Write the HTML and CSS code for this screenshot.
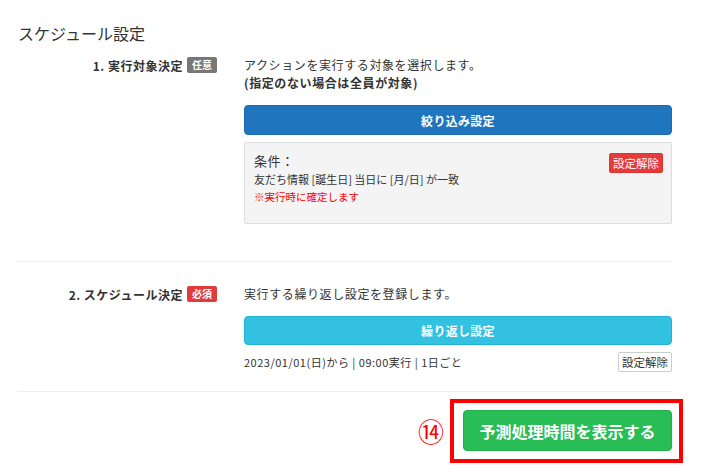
FILE: index.html
```html
<!DOCTYPE html>
<html lang="ja">
<head>
<meta charset="utf-8">
<link rel="stylesheet" href="styles.css">
</head>
<body>
<div class="page">
  <h2 class="title">スケジュール設定</h2>

  <div class="row row-first">
    <div class="label">1. 実行対象決定<span class="badge badge-gray">任意</span></div>
    <div class="content">
      <p class="desc">アクションを実行する対象を選択します。<br><strong>(指定のない場合は全員が対象)</strong></p>
      <button class="btn btn-blue">絞り込み設定</button>
      <div class="cond">
        <div class="cond-text">
          <div class="cond-title">条件：</div>
          <div class="cond-line">友だち情報 [誕生日] 当日に [月/日] が一致</div>
          <div class="cond-note">※実行時に確定します</div>
        </div>
        <button class="btn-red-sm">設定解除</button>
      </div>
    </div>
  </div>

  <div class="row row-second">
    <div class="label">2. スケジュール決定<span class="badge badge-red">必須</span></div>
    <div class="content">
      <p class="desc">実行する繰り返し設定を登録します。</p>
      <button class="btn btn-cyan">繰り返し設定</button>
      <div class="sched">
        <span class="sched-text">2023/01/01(日)から | 09:00実行 | 1日ごと</span>
        <button class="btn-white-sm">設定解除</button>
      </div>
    </div>
  </div>

  <div class="footer">
    <span class="num">⑭</span>
    <div class="highlight">
      <button class="btn-green">予測処理時間を表示する</button>
    </div>
  </div>
</div>
</body>
</html>
```

FILE: styles.css
```css
* { box-sizing: border-box; }
html, body { margin: 0; padding: 0; background: #fff; }
body {
  font-family: "Noto Sans CJK JP", "Noto Sans", sans-serif;
  color: #333;
}
.page {
  width: 672px;
  padding-left: 17px;
}
.title {
  margin: 0;
  padding-top: 21px;
  font-size: 16px;
  font-weight: 400;
  line-height: 24px;
  padding-left: 1px;
}
.row {
  display: grid;
  grid-template-columns: 200px 428px;
  column-gap: 27px;
  border-bottom: 1px solid #eee;
}
.row-first { padding-top: 11px; padding-bottom: 37px; }
.row-second { padding-top: 23px; padding-bottom: 19px; }
.label {
  display: flex;
  justify-content: flex-end;
  align-items: center;
  align-self: start;
  height: 18px;
  font-size: 12px;
  font-weight: 700;
  letter-spacing: 0.5px;
  color: #333;
  white-space: nowrap;
}
.badge {
  display: inline-block;
  margin-left: 4px;
  width: 30px;
  height: 16px;
  line-height: 16px;
  text-align: center;
  font-size: 10px;
  font-weight: 700;
  letter-spacing: 0;
  color: #fff;
  border-radius: 2px;
}
.badge-gray { background: #777; }
.badge-red { background: #e03c3c; }
.content { display: flex; flex-direction: column; }
.desc {
  margin: 0;
  font-size: 12px;
  line-height: 18px;
  letter-spacing: 0.6px;
  color: #333;
}
.desc strong { font-weight: 700; }
.btn {
  display: block;
  width: 100%;
  margin-top: 13px;
  border-radius: 4px;
  font-family: inherit;
  font-size: 12px;
  font-weight: 700;
  letter-spacing: 0.3px;
  color: #fff;
  text-align: center;
  cursor: pointer;
}
.btn-blue {
  height: 30px;
  background: #1f76be;
  border: 1px solid #1b6bae;
}
.btn-cyan {
  height: 29px;
  background: #32c1e1;
  border: 1px solid #1fb4d6;
}
.cond {
  margin-top: 7px;
  height: 82px;
  background: #f4f4f4;
  border: 1px solid #ddd;
  border-radius: 2px;
  padding: 9px 8px 0 9px;
  display: flex;
  justify-content: space-between;
  align-items: flex-start;
}
.cond-title { font-size: 13px; line-height: 18px; color: #333; letter-spacing: 0.5px; }
.cond-line { font-size: 11px; line-height: 18px; color: #333; }
.cond-note { font-size: 10.5px; line-height: 18px; color: #f00; }
.btn-red-sm {
  margin-top: 1px;
  width: 54px;
  height: 20px;
  padding: 0;
  background: #e53b3b;
  border: 1px solid #d33;
  border-radius: 2px;
  color: #fff;
  font-family: inherit;
  font-size: 11.5px;
  line-height: 18px;
}
.sched {
  margin-top: 7px;
  display: flex;
  justify-content: space-between;
  align-items: center;
}
.sched-text { font-size: 11px; color: #333; letter-spacing: 0.5px; }
.btn-white-sm {
  width: 54px;
  height: 20px;
  padding: 0;
  background: #fff;
  border: 1px solid #ccc;
  border-radius: 2px;
  color: #333;
  font-family: inherit;
  font-size: 11.5px;
  line-height: 18px;
}
.footer {
  display: flex;
  justify-content: flex-end;
  align-items: center;
  margin-top: 7px;
  margin-right: -11px;
}
.num {
  color: #f00;
  font-size: 26px;
  line-height: 28px;
  margin-right: 6px;
}
.highlight {
  border: 4px solid #f00;
  padding: 7px 7px 8px 9px;
}
.btn-green {
  display: block;
  width: 209px;
  height: 41px;
  background: #28bd55;
  border: 1px solid #22b04c;
  border-radius: 4px;
  color: #fff;
  font-family: inherit;
  font-size: 16px;
  font-weight: 700;
  cursor: pointer;
}
```
